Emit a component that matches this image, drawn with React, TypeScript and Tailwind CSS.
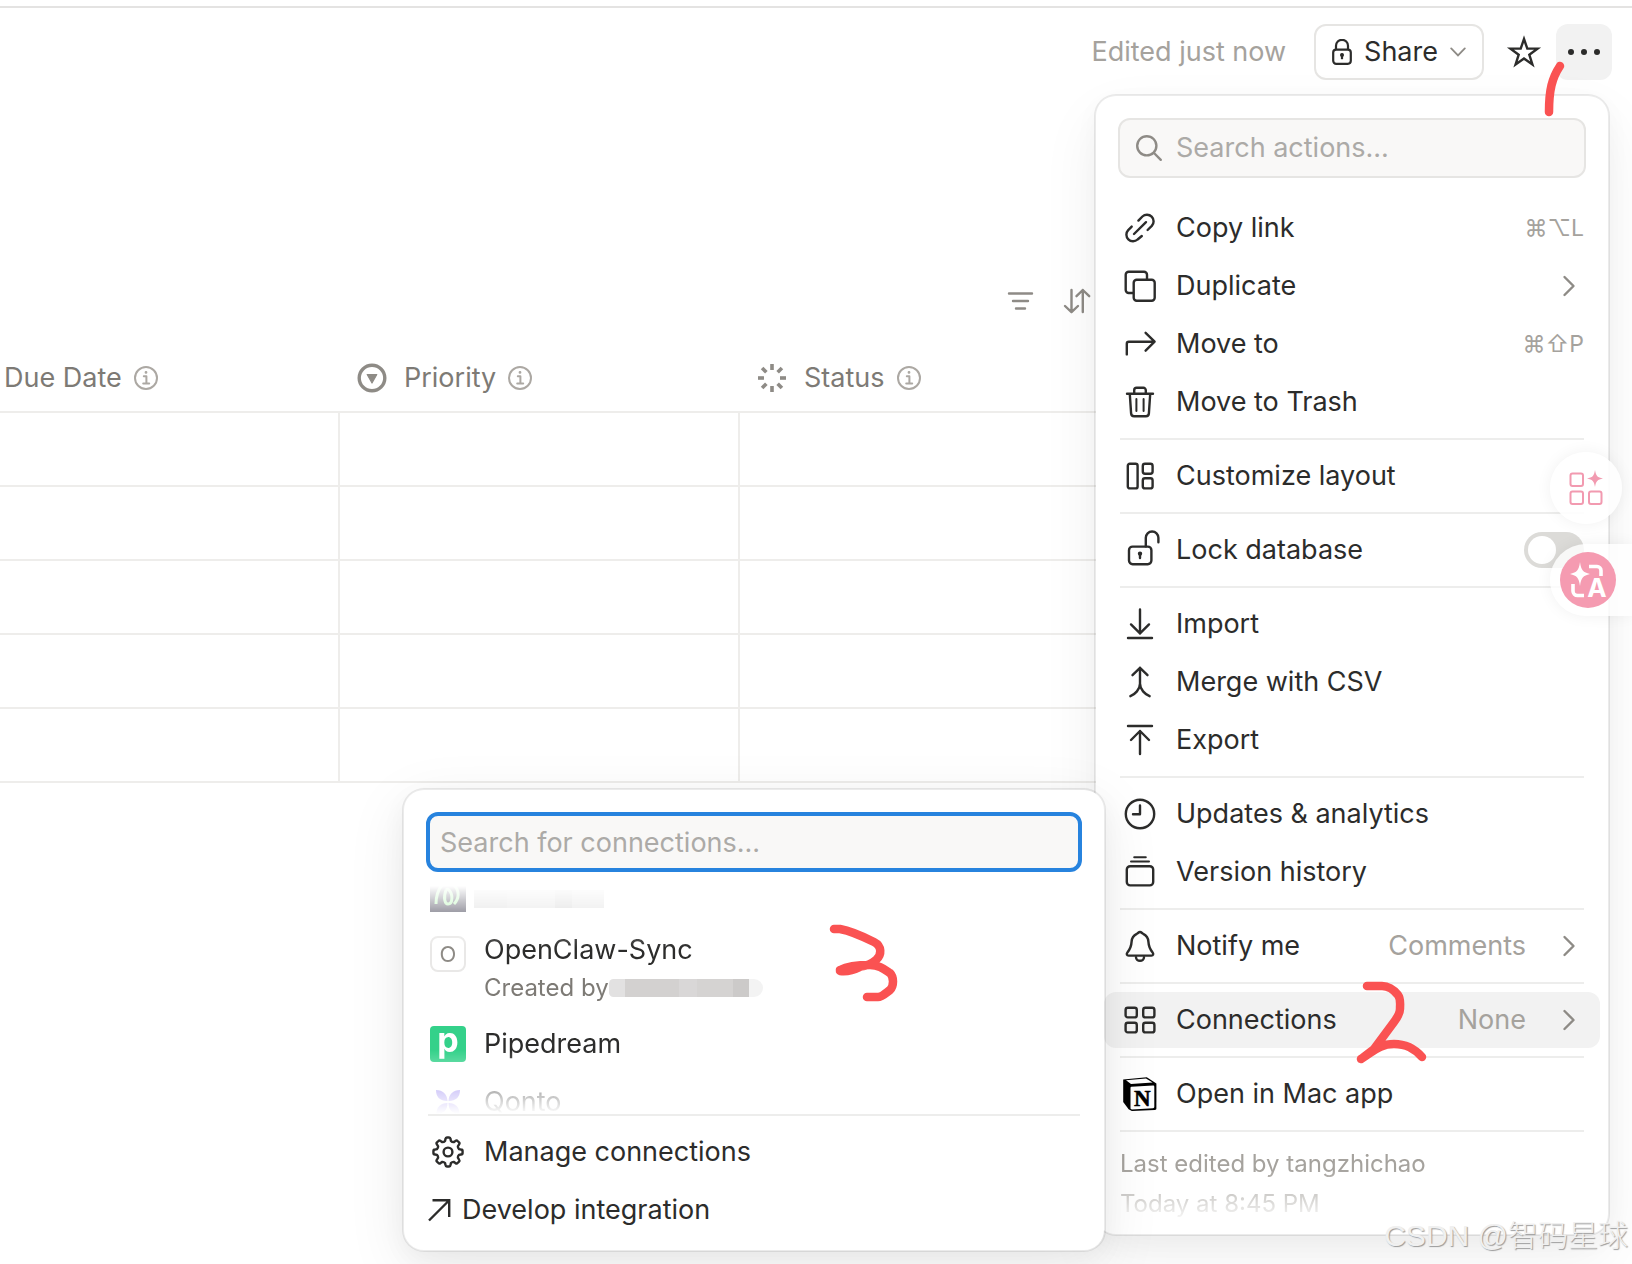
import React, { useState } from 'react';

type IconProps = { children: React.ReactNode; className?: string; size?: number };

const Icon: React.FC<IconProps> = ({ children, className = '', size = 32 }) => (
  <svg
    width={size}
    height={size}
    viewBox={`0 0 ${size} ${size}`}
    fill="none"
    stroke="currentColor"
    strokeWidth="2.4"
    strokeLinecap="round"
    strokeLinejoin="round"
    className={`shrink-0 overflow-visible ${className}`}
    aria-hidden="true"
  >
    {children}
  </svg>
);

const LinkIcon = () => (
  <Icon>
    <path d="M14.4 8.6l4-4.1a6.65 6.65 0 0 1 9.4 9.4L23.6 18M7.7 14.6L4.2 18.1a6.65 6.65 0 0 0 9.4 9.4L17.8 24M10 22L22 10.2" />
  </Icon>
);

const DuplicateIcon = () => (
  <Icon>
    <path d="M9 23H4.7a3 3 0 0 1-3-3V4.8a3 3 0 0 1 3-3H20a3 3 0 0 1 3 3V9" />
    <rect x="9.7" y="9.7" width="21" height="21" rx="3" />
  </Icon>
);

const MoveIcon = () => (
  <Icon>
    <path d="M2.8 26.4V15.7a2 2 0 0 1 2-2H30.5M21.6 4.8l9 8.9-9 9" />
  </Icon>
);

const TrashIcon = () => (
  <Icon>
    <path d="M3 7.8h26M10.2 7.5V4.2a2.4 2.4 0 0 1 2.4-2.4h6.8a2.4 2.4 0 0 1 2.4 2.4v3.3M5.8 8l1.3 19.4a3 3 0 0 0 3 2.8h11.8a3 3 0 0 0 3-2.8L26.2 8" />
    <path d="M12.4 13v12M19.6 13v12" strokeWidth="2" />
  </Icon>
);

const LayoutIcon = () => (
  <Icon>
    <rect x="3.8" y="3.8" width="9.8" height="24.6" rx="2" />
    <rect x="18.8" y="3.8" width="9.8" height="10" rx="2.2" />
    <rect x="18.8" y="18.2" width="9.8" height="10.2" rx="2.2" />
  </Icon>
);

const UnlockIcon = () => (
  <Icon>
    <rect x="5" y="12.6" width="22.4" height="17.6" rx="3.6" />
    <path d="M21.8 12.4V3.8a6.2 6.2 0 0 1 12.6 0v4.4" />
    <circle cx="16" cy="19.6" r="1.4" fill="currentColor" strokeWidth="1.6" />
    <path d="M16 20v4" />
  </Icon>
);

const ImportIcon = () => (
  <Icon>
    <path d="M16 1.5v24M7 16.400l9 9 9-9M4 30h24" />
  </Icon>
);

const MergeIcon = () => (
  <Icon>
    <path d="M16 1.8v16M8.500 9.200L16 1.800l7.500 7.400M16 17.500c0 6-5 10.800-9.600 12.700M16 17.500c0 6 5 10.800 9.600 12.700" />
  </Icon>
);

const ExportIcon = () => (
  <Icon>
    <path d="M4 2h24M16 30V7M7 16l9-9 9 9" />
  </Icon>
);

const ClockIcon = () => (
  <Icon>
    <circle cx="16" cy="16" r="14.2" />
    <path d="M16 7.5v8.8H9" />
  </Icon>
);

const HistoryIcon = () => (
  <Icon>
    <path d="M10.2 1.2h11.6M7 5.5h18" strokeWidth="2" />
    <rect x="2.8" y="10.2" width="26.4" height="19.2" rx="3.4" />
  </Icon>
);

const BellIcon = () => (
  <Icon>
    <path d="M16 2c-1.400 0-2 1.200-3.200 1.800C9.500 5.300 7.800 8 7.600 11.600c-.3 5.400-1.500 7.600-4.200 10.800-1.200 1.500-.6 3.200 1.200 3.200h22.800c1.800 0 2.400-1.700 1.200-3.200-2.700-3.200-3.900-5.400-4.200-10.800-.2-3.600-1.900-6.300-5.200-7.800C18 3.200 17.400 2 16 2z" />
    <path d="M12 27.200a4 3.600 0 0 0 8 0" />
  </Icon>
);

const GridIcon = () => (
  <Icon>
    <rect x="1.6" y="3.8" width="11.2" height="9.6" rx="2.2" />
    <rect x="19.2" y="3.8" width="11.2" height="9.6" rx="2.2" />
    <rect x="1.6" y="18.8" width="11.2" height="9.6" rx="2.2" />
    <rect x="19.2" y="18.8" width="11.2" height="9.6" rx="2.2" />
  </Icon>
);

const NotionIcon = () => (
  <Icon>
    <path d="M-.8 1.600L22.800-.8l9.600 6.200v24.800c0 1-.4 1.600-1.600 1.700L7.800 33 4.600 31.200-.8 24z" fill="#000" stroke="none" />
    <path d="M2 2.200L22 .6l6.600 4L7 6z" fill="#fff" stroke="none" />
    <path d="M7.400 8.800l21.600-1.400c.9 0 1.300.4 1.300 1.300v20.100c0 .9-.4 1.400-1.300 1.500L8 31.400c-1 0-1.500-.4-1.500-1.400V9.900c0-.7.300-1.100.9-1.100z" fill="#fff" stroke="none" />
    <text x="18.4" y="27.6" textAnchor="middle" fontSize="23" fontWeight="700" fontFamily="'Liberation Serif', serif" fill="#000" stroke="#000" strokeWidth="0.6">
      N
    </text>
  </Icon>
);

// eight-toothed cog around the centre of a 32px box
const cogPath = (() => {
  const at = (radius: number, deg: number) => {
    const angle = (deg * Math.PI) / 180;
    return `${(16 + radius * Math.cos(angle)).toFixed(2)} ${(16 + radius * Math.sin(angle)).toFixed(2)}`;
  };
  let d = `M${at(11.4, -105)}`;
  for (let i = 0; i < 8; i++) {
    const deg = i * 45 - 90;
    d += `L${at(13.2, deg - 11)}Q${at(14.8, deg - 9)} ${at(14.6, deg - 4)}L${at(14.6, deg + 4)}`;
    d += `Q${at(14.8, deg + 9)} ${at(13.2, deg + 11)}L${at(11.4, deg + 15)}Q${at(10.6, deg + 22.5)} ${at(11.4, deg + 30)}`;
  }
  return `${d}z`;
})();

const CogIcon = () => (
  <Icon>
    <path d={cogPath} />
    <circle cx="16" cy="16" r="4.4" />
  </Icon>
);

const ChevronIcon = () => (
  <Icon className="text-[#8e8b86]">
    <path d="M12.500 7l9 9-9 9" />
  </Icon>
);

const InfoIcon = () => (
  <Icon size={24} className="text-[#aca8a3]">
    <circle cx="12" cy="12" r="11" strokeWidth="2" />
    <path d="M9.8 10.2h2.600V17M9.200 17.400h6" strokeWidth="2" />
    <circle cx="12" cy="6.4" r="0.8" fill="currentColor" strokeWidth="1.200" />
  </Icon>
);

const PriorityIcon = () => (
  <Icon size={30} className="text-[#8e8b86]">
    <circle cx="15" cy="15" r="12.8" strokeWidth="3.4" />
    <path d="M10.200 11.500h9.600L15 20z" fill="currentColor" strokeWidth="1.2" />
  </Icon>
);

const StatusIcon = () => (
  <Icon size={30} className="text-[#8e8b86]">
    {[0, 45, 90, 135, 180, 225, 270, 315].map((deg) => (
      <path key={deg} d="M15 1v6" strokeWidth="3.6" strokeLinecap="butt" transform={`rotate(${deg} 15 15)`} />
    ))}
  </Icon>
);

type MenuItem = {
  label: string;
  icon: React.ReactNode;
  shortcut?: string;
  value?: string;
  chevron?: boolean;
  toggle?: boolean;
  active?: boolean;
};

const menuGroups: MenuItem[][] = [
  [
    { label: 'Copy link', icon: <LinkIcon />, shortcut: '⌘⌥L' },
    { label: 'Duplicate', icon: <DuplicateIcon />, chevron: true },
    { label: 'Move to', icon: <MoveIcon />, shortcut: '⌘⇧P' },
    { label: 'Move to Trash', icon: <TrashIcon /> },
  ],
  [{ label: 'Customize layout', icon: <LayoutIcon /> }],
  [{ label: 'Lock database', icon: <UnlockIcon />, toggle: true }],
  [
    { label: 'Import', icon: <ImportIcon /> },
    { label: 'Merge with CSV', icon: <MergeIcon /> },
    { label: 'Export', icon: <ExportIcon /> },
  ],
  [
    { label: 'Updates & analytics', icon: <ClockIcon /> },
    { label: 'Version history', icon: <HistoryIcon /> },
  ],
  [{ label: 'Notify me', icon: <BellIcon />, value: 'Comments', chevron: true }],
  [{ label: 'Connections', icon: <GridIcon />, value: 'None', chevron: true, active: true }],
  [{ label: 'Open in Mac app', icon: <NotionIcon /> }],
];

const MenuRow: React.FC<{ item: MenuItem }> = ({ item }) => {
  const [locked, setLocked] = useState(false);
  const rowClass = 'flex h-14 w-full items-center rounded-xl pl-5 pr-4 text-left';

  if (item.toggle) {
    return (
      <label className={rowClass}>
        {item.icon}
        <span className="ml-5 flex-1">{item.label}</span>
        <input
          type="checkbox"
          role="switch"
          checked={locked}
          onChange={(e) => setLocked(e.target.checked)}
          className="h-9 w-15 appearance-none rounded-full bg-[#dcdbd8] p-1 before:block before:size-7 before:rounded-full before:bg-white checked:bg-[#2783de] checked:before:ml-6"
        />
      </label>
    );
  }

  return (
    <button type="button" className={`${rowClass} ${item.active ? 'bg-[#f2f2f2]' : ''}`}>
      {item.icon}
      <span className="ml-5 flex-1">{item.label}</span>
      {item.shortcut && <span className="text-[23px] text-[#a5a29d]">{item.shortcut}</span>}
      {item.value && <span className="mr-[26px] text-[#a5a29d]">{item.value}</span>}
      {item.chevron && <ChevronIcon />}
    </button>
  );
};

const ActionsMenu: React.FC = () => (
  <div className="absolute top-[94px] right-[22px] w-[516px] rounded-[22px] border-2 border-black/8 bg-white bg-clip-padding pt-[22px] pb-[10px] shadow-[0_8px_24px_rgba(0,0,0,0.03),0_24px_60px_rgba(0,0,0,0.06)]">
    <label className="mx-[22px] mb-[14px] flex h-15 items-center rounded-xl border-2 border-[#e6e5e3] bg-[#f9f8f7] pl-4">
      <Icon size={26} className="text-[#8e8b86]">
        <circle cx="10.8" cy="10.8" r="9.6" />
        <path d="M18 18l6.800 6.800" />
      </Icon>
      <input
        aria-label="Search actions"
        placeholder="Search actions..."
        className="ml-[14px] min-w-0 flex-1 bg-transparent outline-none placeholder:text-[#acaaa7]"
      />
    </label>
    {menuGroups.map((group, i) => (
      <div key={group[0].label}>
        {i > 0 && <hr className="mx-6 border-t-2 border-[#ededec]" />}
        <div className="flex flex-col gap-0.5 p-2">
          {group.map((item) => (
            <MenuRow key={item.label} item={item} />
          ))}
        </div>
      </div>
    ))}
    <hr className="mx-6 border-t-2 border-[#ededec]" />
    <div className="px-6 pt-3 text-2xl/10 text-[#a5a29d] [mask-image:linear-gradient(to_bottom,#000_40%,transparent)]">
      <p>Last edited by tangzhichao</p>
      <p>Today at 8:45 PM</p>
    </div>
  </div>
);

const ConnectionsMenu: React.FC = () => (
  <div className="absolute top-[788px] right-[526px] w-[704px] rounded-[22px] border-2 border-black/8 bg-white bg-clip-padding pt-[22px] pb-3 shadow-[0_8px_24px_rgba(0,0,0,0.04),0_16px_60px_rgba(0,0,0,0.08)]">
    <div className="mx-[22px] mb-1">
      <input
        aria-label="Search for connections"
        placeholder="Search for connections..."
        className="h-15 w-full rounded-xl border-4 border-[#2783de] bg-[#f9f8f7] px-[10px] outline-none placeholder:text-[#acaaa7]"
      />
    </div>
    <ul className="flex h-[238px] flex-col gap-0.5 overflow-hidden px-[26px] [mask-image:linear-gradient(to_bottom,transparent_10px,#000_72px,#000_174px,transparent)]">
      <li className="flex h-[46px] shrink-0 gap-2">
        <svg width="36" height="36" viewBox="0 0 36 36" fill="none" aria-hidden="true">
          <rect width="36" height="36" fill="#17152b" />
          <path d="M12 9C8 14 6 20 6 28M16 14c-3 8-1 14 2 14 5 0 5-10 1-14-1-1-2-1-3 0M24 9c6 6 5 14 0 19" stroke="#9df59a" strokeWidth="3" />
        </svg>
        <span className="mt-[14px] flex h-[18px] w-[130px]">
          <span className="flex-2 bg-[#d6d6d6]" />
          <span className="flex-3 bg-[#dcdcdc]" />
          <span className="flex-1 bg-[#cccccc]" />
          <span className="flex-2 bg-[#dadada]" />
        </span>
      </li>
      <li className="flex h-[90px] shrink-0 gap-[18px] py-2">
        <span className="mt-1 flex size-9 items-center justify-center rounded-lg border-2 border-[#e9e8e7] text-[22px] text-[#8e8b86]">O</span>
        <div>
          <p className="leading-9">OpenClaw-Sync</p>
          <p className="mt-0.5 flex items-center text-2xl/9 text-[#7d7a75]">
            Created by
            <span className="flex h-[18px] w-[154px] overflow-hidden rounded-r-xl rounded-l-md">
              <span className="w-4 bg-[#e2e1e1]" />
              <span className="flex-3 bg-[#d3d1d0]" />
              <span className="flex-1 bg-[#d9d7d7]" />
              <span className="flex-2 bg-[#d5d3d2]" />
              <span className="w-4 bg-[#cccac9]" />
              <span className="w-[14px] bg-[#f3f3f3]" />
            </span>
          </p>
        </div>
      </li>
      <li className="flex h-14 shrink-0 items-center gap-[18px]">
        <span className="flex size-9 items-start justify-center rounded bg-[#34d18a] text-[34px]/7 font-bold text-white">p</span>
        Pipedream
      </li>
      <li className="flex h-14 shrink-0 items-center gap-[18px]">
        <svg width="36" height="36" viewBox="0 0 36 36" fill="#8f7bf0" aria-hidden="true">
          <path d="M6 6c7 0 11 4 11.500 11C10 17 6 13 6 6zM30 6c0 7-4 11-11.500 11C19 10 23 6 30 6zM17.500 19c0 7-4 11-11 11 0-7 4-11 11-11zM18.500 19c7 0 11 4 11 11-7 0-11-4-11-11z" />
        </svg>
        Qonto
      </li>
    </ul>
    <hr className="mx-6 border-t-2 border-[#ededec]" />
    <div className="flex flex-col gap-0.5 pt-2">
      <button type="button" className="flex h-14 items-center gap-5 px-7">
        <CogIcon />
        Manage connections
      </button>
      <a href="#develop" className="flex h-14 items-center gap-3 px-6">
        <Icon size={22}>
          <path d="M1 21.500L21 1.500M4.500 1.200H21.200V18" strokeLinecap="butt" strokeLinejoin="miter" />
        </Icon>
        Develop integration
      </a>
    </div>
  </div>
);

const TopBar: React.FC = () => (
  <header className="flex items-center justify-end border-t-2 border-[#e4e3e2] pt-4 pr-5">
    <span className="mr-7 text-[#a5a29d]">Edited just now</span>
    <button type="button" className="mr-3 flex h-14 items-center gap-3 rounded-xl border-2 border-[#e6e5e3] px-4">
      <svg width="20" height="26" viewBox="0 0 20 26" fill="none" stroke="currentColor" strokeWidth="2.2" aria-hidden="true">
        <rect x="1.2" y="10.6" width="17.6" height="14.2" rx="3" />
        <path d="M4 10.400V6.800a6 6 0 0 1 12 0v3.600" />
        <circle cx="10" cy="16" r="1.4" fill="currentColor" strokeWidth="1.2" />
        <path d="M10 16v4.200" />
      </svg>
      <span>Share</span>
      <svg width="16" height="10" viewBox="0 0 16 10" fill="none" stroke="#8e8b86" strokeWidth="1.8" aria-hidden="true">
        <path d="M1.200 1.400L8 8.400l6.800-7" strokeLinecap="round" />
      </svg>
    </button>
    <button type="button" aria-label="Favorite" className="mr-1 flex size-14 items-center justify-center">
      <Icon>
        <path d="M16 3l3.300 9.600h10.200l-8.200 6.100 3.100 9.800L16 22.500l-8.400 6 3.100-9.800-8.200-6.100h10.200z" strokeLinejoin="miter" />
      </Icon>
    </button>
    <button type="button" aria-label="More actions" className="flex size-14 items-center justify-center rounded-xl bg-[#f2f2f2]">
      <Icon>
        <g fill="currentColor" stroke="none">
          <circle cx="3" cy="16" r="3" />
          <circle cx="16" cy="16" r="3" />
          <circle cx="29" cy="16" r="3" />
        </g>
      </Icon>
    </button>
  </header>
);

const columns = [
  { name: 'Due Date', icon: null },
  { name: 'Priority', icon: <PriorityIcon /> },
  { name: 'Status', icon: <StatusIcon /> },
];

const DatabaseTable: React.FC = () => (
  <table className="w-full table-fixed border-separate border-spacing-0">
    <colgroup>
      <col className="w-[340px]" />
      <col className="w-[400px]" />
      <col />
    </colgroup>
    <thead>
      <tr>
        {columns.map((column) => (
          <th key={column.name} className="h-[68px] border-b-2 border-[#eeedeb] p-0 text-left font-normal text-[#7d7a75]">
            <span className={`flex items-center ${column.icon ? 'pl-[17px]' : 'pl-1'}`}>
              {column.icon}
              <span className={column.icon ? 'mr-3 ml-[17px]' : 'mr-3'}>{column.name}</span>
              <InfoIcon />
            </span>
          </th>
        ))}
      </tr>
    </thead>
    <tbody>
      {[1, 2, 3, 4, 5].map((row) => (
        <tr key={row}>
          <td className="h-[74px] border-r-2 border-b-2 border-[#eeedeb] p-0" />
          <td className="border-r-2 border-b-2 border-[#eeedeb] p-0" />
          <td className="border-b-2 border-[#eeedeb] p-0" />
        </tr>
      ))}
    </tbody>
  </table>
);

const FloatingTools: React.FC = () => (
  <>
    <button type="button" aria-label="Tools" className="absolute top-[452px] right-[10px] flex size-18 items-center justify-center rounded-full bg-white/90 shadow-[0_0_16px_rgba(0,0,0,0.06)]">
      <svg width="34" height="36" viewBox="0 0 34 36" fill="none" stroke="#f29ab0" strokeWidth="2" aria-hidden="true">
        <rect x="1.5" y="3.500" width="12.500" height="12.500" rx="2" />
        <rect x="1.5" y="21.500" width="12.500" height="12.500" rx="2" />
        <rect x="20" y="21.500" width="12.500" height="12.500" rx="2" />
        <path d="M26 0c1 6 2.500 7.500 8 8.500-5.500 1-7 2.500-8 8.500-1-6-2.500-7.500-8-8.500 5.500-1 7-2.500 8-8.500z" fill="#f29ab0" stroke="none" />
      </svg>
    </button>
    <div className="absolute top-[544px] right-0 flex h-18 items-center rounded-l-full bg-white/80 pr-4 pl-[10px] shadow-[0_0_16px_rgba(0,0,0,0.06)]">
      <button type="button" aria-label="Translate" className="size-14 rounded-full bg-[#f59bb1]">
        <svg width="56" height="56" viewBox="0 0 56 56" fill="none" stroke="#fff" strokeWidth="3.6" aria-hidden="true">
          <path d="M20 10c1.200 8.500 3 10.200 10 12-7 1.800-8.800 3.500-10 12-1.200-8.500-3-10.200-10-12 7-1.800 8.800-3.500 10-12z" fill="#fff" stroke="none" />
          <path d="M29 14.500h8a4 4 0 0 1 4 4V24M13 32v7a4.500 4.500 0 0 0 4.500 4.500H24" />
          <text x="37" y="45" textAnchor="middle" fontSize="26" fontWeight="700" fontFamily="Inter, sans-serif" fill="#fff" stroke="none">
            A
          </text>
        </svg>
      </button>
    </div>
  </>
);

// hand-drawn step numbers over the page
const StepMarks: React.FC = () => (
  <svg className="pointer-events-none absolute top-0 right-0" width="1632" height="1264" viewBox="0 0 1632 1264" fill="none" stroke="#fa5252" strokeWidth="8.5" strokeLinecap="round" strokeLinejoin="round" aria-hidden="true">
    <path d="M1560 66C1552 78 1549 90 1549 112" />
    <path d="M1367 986h15c7 0 12 4 16 9 3 4 2 8 2 14 0 5-3 9-6 13l-20 27-13 10M1361 1059c12-7 18-15 33-15 12 0 20 4 28 13" />
    <path d="M834 929h6c11 2 24 8 34 13 8 4 8 13 2 18-7 6-12 6-18 7l-18 3c8-4 18-5 30-5 9 0 14 4 20 8 4 4 4 13 0 17-4 3-8 7-12 7h-11M840 971c8 1 14-1 20-4" />
  </svg>
);

export default function App() {
  return (
    <div className="relative min-h-screen overflow-hidden bg-white pt-1.5 font-[Inter,'Liberation_Sans','Noto_Sans_CJK_SC',sans-serif] text-[27px] text-[#2c2c2b]">
      <TopBar />
      <main className="pt-[201px]">
        <div className="flex h-10 items-center justify-end gap-8 pr-[542px] text-[#8e8b86]">
          <button type="button" aria-label="Filter">
            <Icon size={24}>
              <path d="M1 4.500h23M5 12h15M8 19.500h9" />
            </Icon>
          </button>
          <button type="button" aria-label="Sort">
            <Icon size={26}>
              <path d="M7.500 2v22M1 18l6.500 6.200L14 18M18.800 24V2M12.500 8.200L18.800 2l6.400 6.200" />
            </Icon>
          </button>
        </div>
        <div className="mr-15 pt-6">
          <DatabaseTable />
        </div>
      </main>
      <ActionsMenu />
      <ConnectionsMenu />
      <FloatingTools />
      <StepMarks />
      <p className="absolute right-1 bottom-[10px] font-['Liberation_Sans','Noto_Sans_CJK_SC',sans-serif] text-3xl font-light text-[#f0f0f0] [text-shadow:1px_1px_1px_#999]">CSDN @智码星球</p>
    </div>
  );
}
